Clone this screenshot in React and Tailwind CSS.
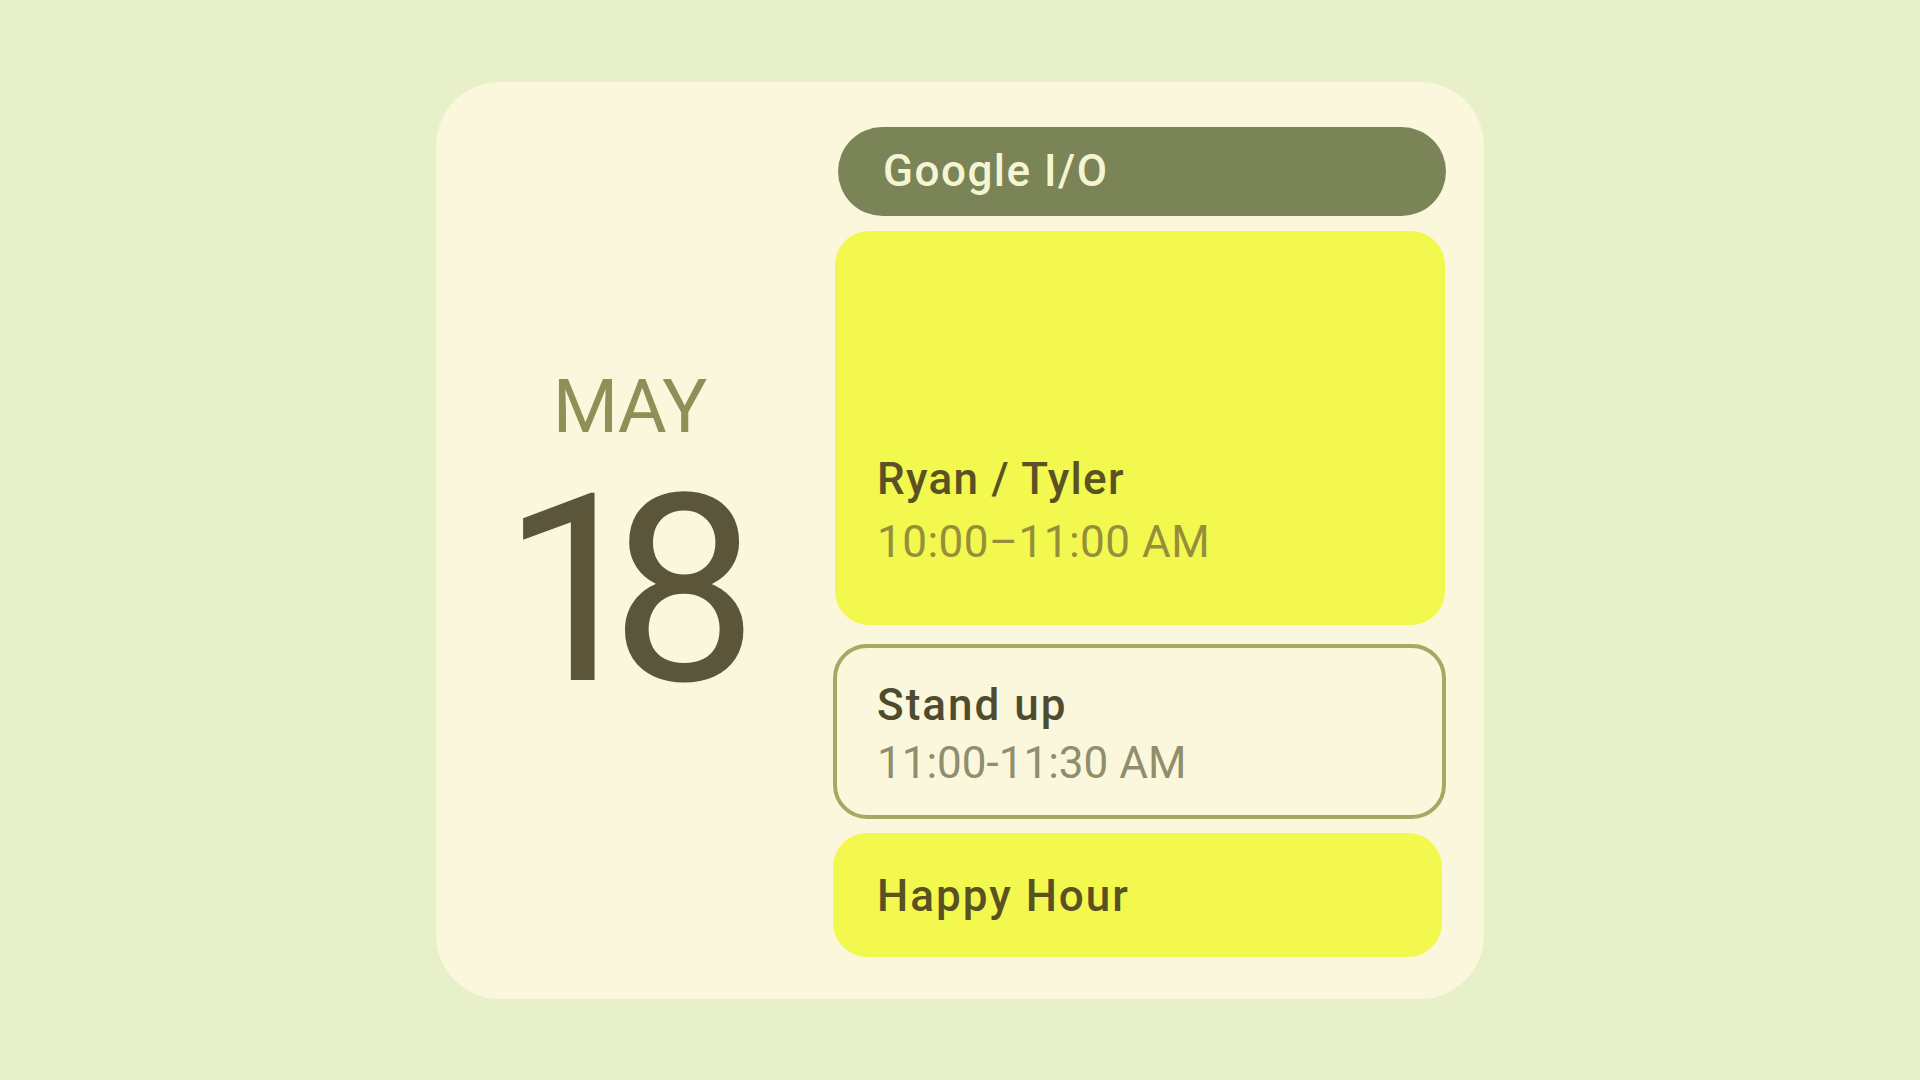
import React from 'react';

const events = {
  pill: 'Google I/O',
};

const App = () => {
  return (
    <div className="min-h-screen w-full bg-[#e7f0c8] flex items-center justify-center font-['Roboto',sans-serif]">
      {/* Widget card */}
      <div className="w-[1048px] h-[917px] bg-[#fbf7dc] rounded-[64px] flex pt-[45px] pr-[38px] pb-[42px]">
        {/* Date column */}
        <div className="w-[397px] flex flex-col items-center justify-center pr-[10px] pb-[18px]">
          <span className="text-[75px] leading-none text-[#8e9157] tracking-[-1px]">MAY</span>
          <span className="mt-[42px] text-[262px] leading-[0.8] text-[#5b553a] tracking-[-38px] pr-[38px]">18</span>
        </div>

        {/* Agenda column */}
        <div className="flex-1 flex flex-col">
          <div className="ml-[5px] h-[90px] rounded-full bg-[#7a8456] flex items-center pl-[45px]">
            <span className="text-[44px] leading-none font-medium text-[#f4f5d3] tracking-[1.5px]">{events.pill}</span>
          </div>

          <div className="mt-[15px] ml-[2px] mr-[1px] h-[394px] rounded-[34px] bg-[#f2f84e] flex flex-col justify-end pl-[42px] pb-[61px]">
            <span className="text-[44px] leading-none font-medium text-[#5b5223] tracking-[1.3px]">Ryan / Tyler</span>
            <span className="mt-[19px] text-[44px] leading-none text-[#958e3b] tracking-[0.5px]">10:00–11:00 AM</span>
          </div>

          <div className="mt-[19px] h-[175px] rounded-[34px] border-[4px] border-[#a7a863] flex flex-col pl-[40px] pt-[35px]">
            <span className="text-[44px] leading-none font-medium text-[#4f4b2f] tracking-[2px]">Stand up</span>
            <span className="mt-[14px] text-[44px] leading-none text-[#8f8e6d]">11:00-11:30 AM</span>
          </div>

          <div className="mt-[14px] mr-[4px] h-[124px] rounded-[34px] bg-[#f2f84e] flex items-center pl-[44px]">
            <span className="text-[44px] leading-none font-medium text-[#5a5122] pt-[2px] tracking-[2px]">Happy Hour</span>
          </div>
        </div>
      </div>
    </div>
  );
};

export default App;
